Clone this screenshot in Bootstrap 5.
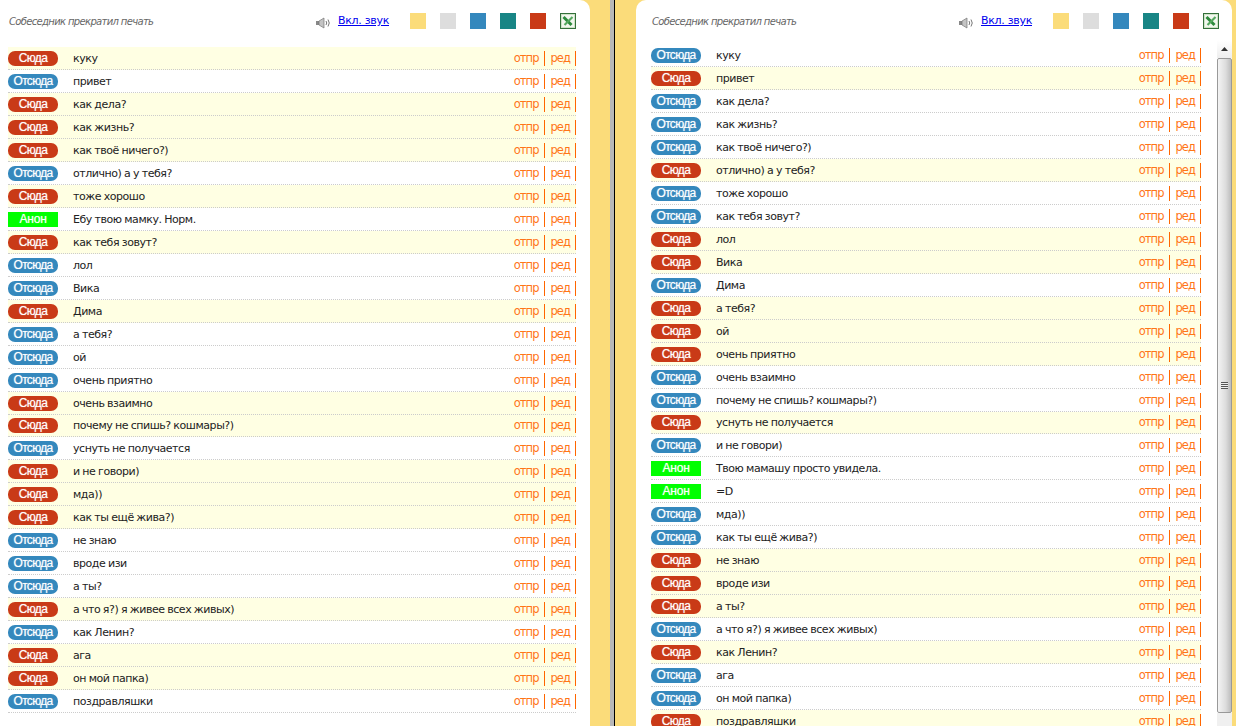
<!DOCTYPE html>
<html lang="ru">
<head>
<meta charset="utf-8">
<title>Чат</title>
<link href="https://cdn.jsdelivr.net/npm/bootstrap@5.3.0/dist/css/bootstrap.min.css" rel="stylesheet">
<style>
html,body{height:726px;overflow:hidden}
body{background:#fbdc7a;font-family:"DejaVu Sans",sans-serif;font-size:11px;color:#222;line-height:15px}
.stage{height:726px}
.pane{background:#fff;height:726px;overflow:hidden;flex:none}
.pane-l{width:590px;border-top-right-radius:10px;padding:0 14px 0 8px}
.pane-r{width:596px;margin-left:21px;border-top-left-radius:10px;border-top-right-radius:10px;padding-left:15px}
.gap-l{width:20px;flex:none}
.divider{width:5px;flex:none;background:#b8b8b8;border-right:1px solid #000}
.chat-head{height:47px;padding-top:14px;width:568px}
.pane-r .chat-head{height:44px}
.typing{font-style:italic;font-size:10px;color:#666;letter-spacing:-.66px;padding-left:1px}
.tools{margin-top:-1px}
.speaker{margin-top:4px;flex:none}
.sound{color:#00e;text-decoration:underline;font-size:11px;letter-spacing:-.3px;margin:0 21px 0 7px}
.swatch{width:16px;height:16px;margin-right:14px;display:block}
.excel{width:16px;height:16px;display:block}
.sw-a{background:#fbdc7a}.sw-b{background:#ddd}.sw-c{background:#3488bd}.sw-d{background:#188585}.sw-e{background:#c93a17}
.msg{height:22.97px;padding-top:1px;border-bottom:1px dotted #ccc;font-size:12px}
.msg.here{background:#ffffe3}
.who{width:50px;height:15px;color:#fff;text-align:center;font-size:12px;line-height:14px;border-radius:7px;letter-spacing:-.7px;flex:none;margin-right:15px;font-family:"Liberation Sans",sans-serif;text-shadow:0 0 1px rgba(255,255,255,.6)}
.here .who{background:#c93a17}
.there .who{background:#3488bd}
.anon .who{background:#0f0;border-radius:0;letter-spacing:-.2px}
.txt{font-size:11px;letter-spacing:-.45px;word-spacing:-.4px;white-space:nowrap;color:#222}
.act{color:#ff7518;font-size:11.5px;letter-spacing:-.95px;text-decoration:none}
.bar{width:1px;height:15px;background:#f60;flex:none;margin:0 6px 0 5px}
.bar-end{margin:0 0 0 5px}
.chat-col{width:568px;flex:none}
.scroll-col{width:15px;margin-left:-2px;flex:none;padding-top:40px;height:726px}
.scroll-up{height:18px;background:linear-gradient(#fff,#eee);display:flex;align-items:center;justify-content:center}
.thumb{height:655px;border:1px solid #999;border-radius:2px;background:linear-gradient(90deg,#f4f4f4,#dcdcdc 60%,#bdbdbd);display:flex;align-items:center;justify-content:center}
.track{height:13px;background:#f0f0f0}
.grip{width:7px;height:7px;background:repeating-linear-gradient(#555 0 1px,#eee 1px 2px)}
.feed{width:568px}
.pane-r .feed{width:550px}
</style>
</head>
<body>
<div class="stage d-flex">
<section class="pane pane-l">
<div class="chat-head d-flex justify-content-between">
<span class="typing">Собеседник прекратил печать</span>
<div class="tools d-flex align-items-start">
<svg class="speaker" width="16" height="12" viewBox="0 0 16 12"><rect x="1" y="4" width="3" height="4" fill="#888"/><path d="M4 4l5-3v10L4 8z" fill="#c4c4c4" stroke="#777" stroke-width=".7"/><path d="M11 4q1.500 2 0 4M13 2.500q2.500 3.500 0 7" fill="none" stroke="#777"/></svg>
<a class="sound" href="#">Вкл. звук</a>
<span class="swatch sw-a"></span><span class="swatch sw-b"></span><span class="swatch sw-c"></span><span class="swatch sw-d"></span><span class="swatch sw-e"></span>
<svg class="excel" viewBox="0 0 16 16"><rect x=".5" y=".5" width="15" height="15" fill="#f2f7ef" stroke="#33703a"/><rect x="1.500" y="1.500" width="13" height="13" fill="none" stroke="#cfe3c8"/><path d="M3.500 4l8 8" stroke="#2d8a3c" stroke-width="3"/><path d="M12.500 4l-8 8" stroke="#55a85f" stroke-width="2.200"/></svg>
</div>
</div>
<div class="feed">
<div class="msg here d-flex align-items-center"><span class="who">Сюда</span><span class="txt flex-grow-1">куку</span><a class="act" href="#">отпр</a><span class="bar"></span><a class="act" href="#">ред</a><span class="bar bar-end"></span></div>
<div class="msg there d-flex align-items-center"><span class="who">Отсюда</span><span class="txt flex-grow-1">привет</span><a class="act" href="#">отпр</a><span class="bar"></span><a class="act" href="#">ред</a><span class="bar bar-end"></span></div>
<div class="msg here d-flex align-items-center"><span class="who">Сюда</span><span class="txt flex-grow-1">как дела?</span><a class="act" href="#">отпр</a><span class="bar"></span><a class="act" href="#">ред</a><span class="bar bar-end"></span></div>
<div class="msg here d-flex align-items-center"><span class="who">Сюда</span><span class="txt flex-grow-1">как жизнь?</span><a class="act" href="#">отпр</a><span class="bar"></span><a class="act" href="#">ред</a><span class="bar bar-end"></span></div>
<div class="msg here d-flex align-items-center"><span class="who">Сюда</span><span class="txt flex-grow-1">как твоё ничего?)</span><a class="act" href="#">отпр</a><span class="bar"></span><a class="act" href="#">ред</a><span class="bar bar-end"></span></div>
<div class="msg there d-flex align-items-center"><span class="who">Отсюда</span><span class="txt flex-grow-1">отлично) а у тебя?</span><a class="act" href="#">отпр</a><span class="bar"></span><a class="act" href="#">ред</a><span class="bar bar-end"></span></div>
<div class="msg here d-flex align-items-center"><span class="who">Сюда</span><span class="txt flex-grow-1">тоже хорошо</span><a class="act" href="#">отпр</a><span class="bar"></span><a class="act" href="#">ред</a><span class="bar bar-end"></span></div>
<div class="msg anon d-flex align-items-center"><span class="who">Анон</span><span class="txt flex-grow-1">Ебу твою мамку. Норм.</span><a class="act" href="#">отпр</a><span class="bar"></span><a class="act" href="#">ред</a><span class="bar bar-end"></span></div>
<div class="msg here d-flex align-items-center"><span class="who">Сюда</span><span class="txt flex-grow-1">как тебя зовут?</span><a class="act" href="#">отпр</a><span class="bar"></span><a class="act" href="#">ред</a><span class="bar bar-end"></span></div>
<div class="msg there d-flex align-items-center"><span class="who">Отсюда</span><span class="txt flex-grow-1">лол</span><a class="act" href="#">отпр</a><span class="bar"></span><a class="act" href="#">ред</a><span class="bar bar-end"></span></div>
<div class="msg there d-flex align-items-center"><span class="who">Отсюда</span><span class="txt flex-grow-1">Вика</span><a class="act" href="#">отпр</a><span class="bar"></span><a class="act" href="#">ред</a><span class="bar bar-end"></span></div>
<div class="msg here d-flex align-items-center"><span class="who">Сюда</span><span class="txt flex-grow-1">Дима</span><a class="act" href="#">отпр</a><span class="bar"></span><a class="act" href="#">ред</a><span class="bar bar-end"></span></div>
<div class="msg there d-flex align-items-center"><span class="who">Отсюда</span><span class="txt flex-grow-1">а тебя?</span><a class="act" href="#">отпр</a><span class="bar"></span><a class="act" href="#">ред</a><span class="bar bar-end"></span></div>
<div class="msg there d-flex align-items-center"><span class="who">Отсюда</span><span class="txt flex-grow-1">ой</span><a class="act" href="#">отпр</a><span class="bar"></span><a class="act" href="#">ред</a><span class="bar bar-end"></span></div>
<div class="msg there d-flex align-items-center"><span class="who">Отсюда</span><span class="txt flex-grow-1">очень приятно</span><a class="act" href="#">отпр</a><span class="bar"></span><a class="act" href="#">ред</a><span class="bar bar-end"></span></div>
<div class="msg here d-flex align-items-center"><span class="who">Сюда</span><span class="txt flex-grow-1">очень взаимно</span><a class="act" href="#">отпр</a><span class="bar"></span><a class="act" href="#">ред</a><span class="bar bar-end"></span></div>
<div class="msg here d-flex align-items-center"><span class="who">Сюда</span><span class="txt flex-grow-1">почему не спишь? кошмары?)</span><a class="act" href="#">отпр</a><span class="bar"></span><a class="act" href="#">ред</a><span class="bar bar-end"></span></div>
<div class="msg there d-flex align-items-center"><span class="who">Отсюда</span><span class="txt flex-grow-1">уснуть не получается</span><a class="act" href="#">отпр</a><span class="bar"></span><a class="act" href="#">ред</a><span class="bar bar-end"></span></div>
<div class="msg here d-flex align-items-center"><span class="who">Сюда</span><span class="txt flex-grow-1">и не говори)</span><a class="act" href="#">отпр</a><span class="bar"></span><a class="act" href="#">ред</a><span class="bar bar-end"></span></div>
<div class="msg here d-flex align-items-center"><span class="who">Сюда</span><span class="txt flex-grow-1">мда))</span><a class="act" href="#">отпр</a><span class="bar"></span><a class="act" href="#">ред</a><span class="bar bar-end"></span></div>
<div class="msg here d-flex align-items-center"><span class="who">Сюда</span><span class="txt flex-grow-1">как ты ещё жива?)</span><a class="act" href="#">отпр</a><span class="bar"></span><a class="act" href="#">ред</a><span class="bar bar-end"></span></div>
<div class="msg there d-flex align-items-center"><span class="who">Отсюда</span><span class="txt flex-grow-1">не знаю</span><a class="act" href="#">отпр</a><span class="bar"></span><a class="act" href="#">ред</a><span class="bar bar-end"></span></div>
<div class="msg there d-flex align-items-center"><span class="who">Отсюда</span><span class="txt flex-grow-1">вроде изи</span><a class="act" href="#">отпр</a><span class="bar"></span><a class="act" href="#">ред</a><span class="bar bar-end"></span></div>
<div class="msg there d-flex align-items-center"><span class="who">Отсюда</span><span class="txt flex-grow-1">а ты?</span><a class="act" href="#">отпр</a><span class="bar"></span><a class="act" href="#">ред</a><span class="bar bar-end"></span></div>
<div class="msg here d-flex align-items-center"><span class="who">Сюда</span><span class="txt flex-grow-1">а что я?) я живее всех живых)</span><a class="act" href="#">отпр</a><span class="bar"></span><a class="act" href="#">ред</a><span class="bar bar-end"></span></div>
<div class="msg there d-flex align-items-center"><span class="who">Отсюда</span><span class="txt flex-grow-1">как Ленин?</span><a class="act" href="#">отпр</a><span class="bar"></span><a class="act" href="#">ред</a><span class="bar bar-end"></span></div>
<div class="msg here d-flex align-items-center"><span class="who">Сюда</span><span class="txt flex-grow-1">ага</span><a class="act" href="#">отпр</a><span class="bar"></span><a class="act" href="#">ред</a><span class="bar bar-end"></span></div>
<div class="msg here d-flex align-items-center"><span class="who">Сюда</span><span class="txt flex-grow-1">он мой папка)</span><a class="act" href="#">отпр</a><span class="bar"></span><a class="act" href="#">ред</a><span class="bar bar-end"></span></div>
<div class="msg there d-flex align-items-center"><span class="who">Отсюда</span><span class="txt flex-grow-1">поздравляшки</span><a class="act" href="#">отпр</a><span class="bar"></span><a class="act" href="#">ред</a><span class="bar bar-end"></span></div>
</div>
</section>
<div class="gap-l"></div>
<div class="divider"></div>
<section class="pane pane-r d-flex">
<div class="chat-col">
<div class="chat-head d-flex justify-content-between">
<span class="typing">Собеседник прекратил печать</span>
<div class="tools d-flex align-items-start">
<svg class="speaker" width="16" height="12" viewBox="0 0 16 12"><rect x="1" y="4" width="3" height="4" fill="#888"/><path d="M4 4l5-3v10L4 8z" fill="#c4c4c4" stroke="#777" stroke-width=".7"/><path d="M11 4q1.500 2 0 4M13 2.500q2.500 3.500 0 7" fill="none" stroke="#777"/></svg>
<a class="sound" href="#">Вкл. звук</a>
<span class="swatch sw-a"></span><span class="swatch sw-b"></span><span class="swatch sw-c"></span><span class="swatch sw-d"></span><span class="swatch sw-e"></span>
<svg class="excel" viewBox="0 0 16 16"><rect x=".5" y=".5" width="15" height="15" fill="#f2f7ef" stroke="#33703a"/><rect x="1.500" y="1.500" width="13" height="13" fill="none" stroke="#cfe3c8"/><path d="M3.500 4l8 8" stroke="#2d8a3c" stroke-width="3"/><path d="M12.500 4l-8 8" stroke="#55a85f" stroke-width="2.200"/></svg>
</div>
</div>
<div class="feed">
<div class="msg there d-flex align-items-center"><span class="who">Отсюда</span><span class="txt flex-grow-1">куку</span><a class="act" href="#">отпр</a><span class="bar"></span><a class="act" href="#">ред</a><span class="bar bar-end"></span></div>
<div class="msg here d-flex align-items-center"><span class="who">Сюда</span><span class="txt flex-grow-1">привет</span><a class="act" href="#">отпр</a><span class="bar"></span><a class="act" href="#">ред</a><span class="bar bar-end"></span></div>
<div class="msg there d-flex align-items-center"><span class="who">Отсюда</span><span class="txt flex-grow-1">как дела?</span><a class="act" href="#">отпр</a><span class="bar"></span><a class="act" href="#">ред</a><span class="bar bar-end"></span></div>
<div class="msg there d-flex align-items-center"><span class="who">Отсюда</span><span class="txt flex-grow-1">как жизнь?</span><a class="act" href="#">отпр</a><span class="bar"></span><a class="act" href="#">ред</a><span class="bar bar-end"></span></div>
<div class="msg there d-flex align-items-center"><span class="who">Отсюда</span><span class="txt flex-grow-1">как твоё ничего?)</span><a class="act" href="#">отпр</a><span class="bar"></span><a class="act" href="#">ред</a><span class="bar bar-end"></span></div>
<div class="msg here d-flex align-items-center"><span class="who">Сюда</span><span class="txt flex-grow-1">отлично) а у тебя?</span><a class="act" href="#">отпр</a><span class="bar"></span><a class="act" href="#">ред</a><span class="bar bar-end"></span></div>
<div class="msg there d-flex align-items-center"><span class="who">Отсюда</span><span class="txt flex-grow-1">тоже хорошо</span><a class="act" href="#">отпр</a><span class="bar"></span><a class="act" href="#">ред</a><span class="bar bar-end"></span></div>
<div class="msg there d-flex align-items-center"><span class="who">Отсюда</span><span class="txt flex-grow-1">как тебя зовут?</span><a class="act" href="#">отпр</a><span class="bar"></span><a class="act" href="#">ред</a><span class="bar bar-end"></span></div>
<div class="msg here d-flex align-items-center"><span class="who">Сюда</span><span class="txt flex-grow-1">лол</span><a class="act" href="#">отпр</a><span class="bar"></span><a class="act" href="#">ред</a><span class="bar bar-end"></span></div>
<div class="msg here d-flex align-items-center"><span class="who">Сюда</span><span class="txt flex-grow-1">Вика</span><a class="act" href="#">отпр</a><span class="bar"></span><a class="act" href="#">ред</a><span class="bar bar-end"></span></div>
<div class="msg there d-flex align-items-center"><span class="who">Отсюда</span><span class="txt flex-grow-1">Дима</span><a class="act" href="#">отпр</a><span class="bar"></span><a class="act" href="#">ред</a><span class="bar bar-end"></span></div>
<div class="msg here d-flex align-items-center"><span class="who">Сюда</span><span class="txt flex-grow-1">а тебя?</span><a class="act" href="#">отпр</a><span class="bar"></span><a class="act" href="#">ред</a><span class="bar bar-end"></span></div>
<div class="msg here d-flex align-items-center"><span class="who">Сюда</span><span class="txt flex-grow-1">ой</span><a class="act" href="#">отпр</a><span class="bar"></span><a class="act" href="#">ред</a><span class="bar bar-end"></span></div>
<div class="msg here d-flex align-items-center"><span class="who">Сюда</span><span class="txt flex-grow-1">очень приятно</span><a class="act" href="#">отпр</a><span class="bar"></span><a class="act" href="#">ред</a><span class="bar bar-end"></span></div>
<div class="msg there d-flex align-items-center"><span class="who">Отсюда</span><span class="txt flex-grow-1">очень взаимно</span><a class="act" href="#">отпр</a><span class="bar"></span><a class="act" href="#">ред</a><span class="bar bar-end"></span></div>
<div class="msg there d-flex align-items-center"><span class="who">Отсюда</span><span class="txt flex-grow-1">почему не спишь? кошмары?)</span><a class="act" href="#">отпр</a><span class="bar"></span><a class="act" href="#">ред</a><span class="bar bar-end"></span></div>
<div class="msg here d-flex align-items-center"><span class="who">Сюда</span><span class="txt flex-grow-1">уснуть не получается</span><a class="act" href="#">отпр</a><span class="bar"></span><a class="act" href="#">ред</a><span class="bar bar-end"></span></div>
<div class="msg there d-flex align-items-center"><span class="who">Отсюда</span><span class="txt flex-grow-1">и не говори)</span><a class="act" href="#">отпр</a><span class="bar"></span><a class="act" href="#">ред</a><span class="bar bar-end"></span></div>
<div class="msg anon d-flex align-items-center"><span class="who">Анон</span><span class="txt flex-grow-1">Твою мамашу просто увидела.</span><a class="act" href="#">отпр</a><span class="bar"></span><a class="act" href="#">ред</a><span class="bar bar-end"></span></div>
<div class="msg anon d-flex align-items-center"><span class="who">Анон</span><span class="txt flex-grow-1">=D</span><a class="act" href="#">отпр</a><span class="bar"></span><a class="act" href="#">ред</a><span class="bar bar-end"></span></div>
<div class="msg there d-flex align-items-center"><span class="who">Отсюда</span><span class="txt flex-grow-1">мда))</span><a class="act" href="#">отпр</a><span class="bar"></span><a class="act" href="#">ред</a><span class="bar bar-end"></span></div>
<div class="msg there d-flex align-items-center"><span class="who">Отсюда</span><span class="txt flex-grow-1">как ты ещё жива?)</span><a class="act" href="#">отпр</a><span class="bar"></span><a class="act" href="#">ред</a><span class="bar bar-end"></span></div>
<div class="msg here d-flex align-items-center"><span class="who">Сюда</span><span class="txt flex-grow-1">не знаю</span><a class="act" href="#">отпр</a><span class="bar"></span><a class="act" href="#">ред</a><span class="bar bar-end"></span></div>
<div class="msg here d-flex align-items-center"><span class="who">Сюда</span><span class="txt flex-grow-1">вроде изи</span><a class="act" href="#">отпр</a><span class="bar"></span><a class="act" href="#">ред</a><span class="bar bar-end"></span></div>
<div class="msg here d-flex align-items-center"><span class="who">Сюда</span><span class="txt flex-grow-1">а ты?</span><a class="act" href="#">отпр</a><span class="bar"></span><a class="act" href="#">ред</a><span class="bar bar-end"></span></div>
<div class="msg there d-flex align-items-center"><span class="who">Отсюда</span><span class="txt flex-grow-1">а что я?) я живее всех живых)</span><a class="act" href="#">отпр</a><span class="bar"></span><a class="act" href="#">ред</a><span class="bar bar-end"></span></div>
<div class="msg here d-flex align-items-center"><span class="who">Сюда</span><span class="txt flex-grow-1">как Ленин?</span><a class="act" href="#">отпр</a><span class="bar"></span><a class="act" href="#">ред</a><span class="bar bar-end"></span></div>
<div class="msg there d-flex align-items-center"><span class="who">Отсюда</span><span class="txt flex-grow-1">ага</span><a class="act" href="#">отпр</a><span class="bar"></span><a class="act" href="#">ред</a><span class="bar bar-end"></span></div>
<div class="msg there d-flex align-items-center"><span class="who">Отсюда</span><span class="txt flex-grow-1">он мой папка)</span><a class="act" href="#">отпр</a><span class="bar"></span><a class="act" href="#">ред</a><span class="bar bar-end"></span></div>
<div class="msg here d-flex align-items-center"><span class="who">Сюда</span><span class="txt flex-grow-1">поздравляшки</span><a class="act" href="#">отпр</a><span class="bar"></span><a class="act" href="#">ред</a><span class="bar bar-end"></span></div>
</div>
</div>
<aside class="scroll-col">
<div class="scroll-up"><svg width="7" height="4"><path d="M3.500 0L7 4H0z" fill="#333"/></svg></div>
<div class="thumb"><span class="grip"></span></div>
<div class="track"></div>
</aside>
</section>
</div>
</body>
</html>
